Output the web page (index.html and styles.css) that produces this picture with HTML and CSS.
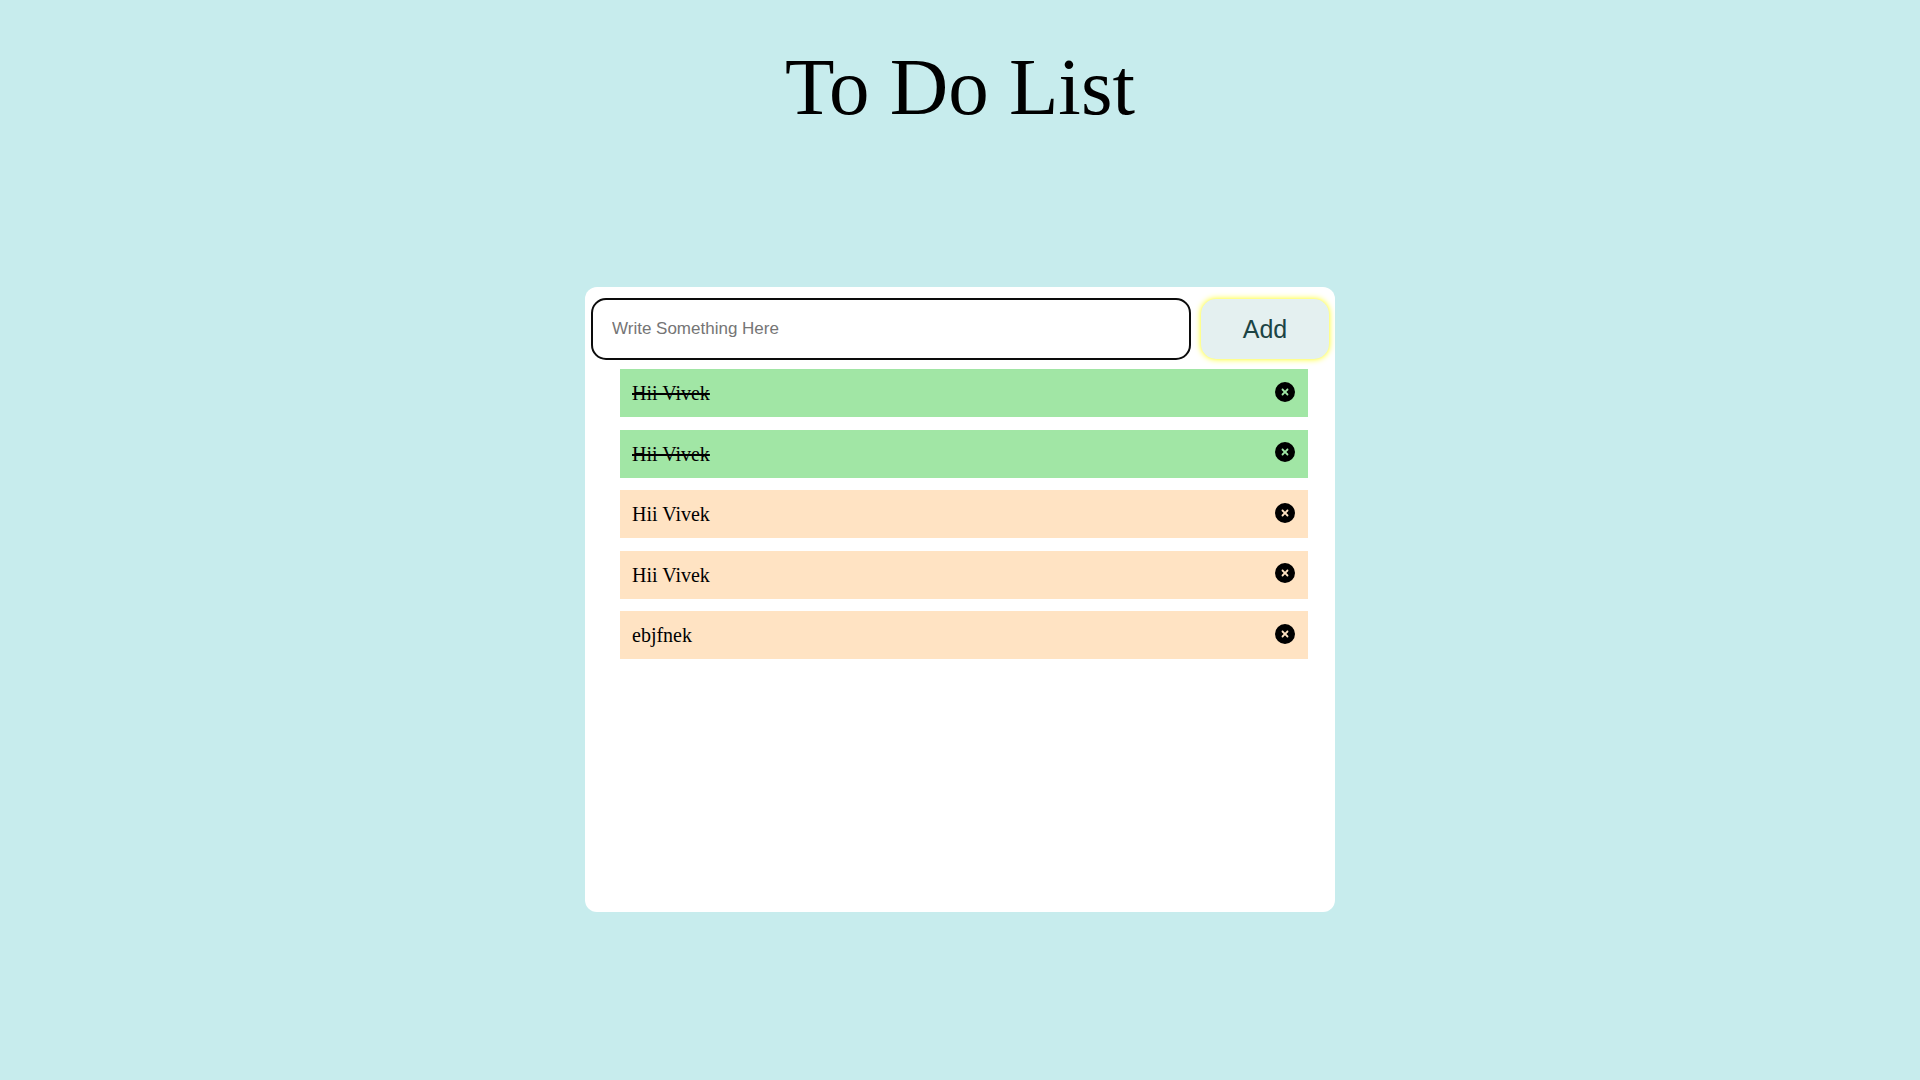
FILE: index.html
```html
<!DOCTYPE html>
<html lang="en">
<head>
<meta charset="utf-8">
<title>To Do List</title>
<link rel="stylesheet" href="styles.css">
</head>
<body>
<svg class="sprite" aria-hidden="true">
  <symbol id="remove" viewBox="0 0 512 512">
    <path fill-rule="evenodd" d="M256 0a256 256 0 1 0 0 512a256 256 0 1 0 0-512zM175 175c9.400-9.400 24.600-9.400 33.900 0l47 47 47-47c9.400-9.400 24.600-9.400 33.900 0s9.400 24.600 0 33.900l-47 47 47 47c9.400 9.400 9.400 24.600 0 33.900s-24.600 9.400-33.900 0l-47-47-47 47c-9.400 9.400-24.600 9.400-33.900 0s-9.400-24.600 0-33.900l47-47-47-47c-9.400-9.400-9.400-24.600 0-33.900z"/>
  </symbol>
</svg>
<h1 class="title">To Do List</h1>
<main class="card">
  <form class="entry">
    <input class="entry-text" type="text" placeholder="Write Something Here" aria-label="New task">
    <button class="entry-add" type="button">Add</button>
  </form>
  <ul class="tasks">
    <li class="task task-done"><span>Hii Vivek</span><button class="remove" type="button" aria-label="Remove"><svg class="icon"><use href="#remove"/></svg></button></li>
    <li class="task task-done"><span>Hii Vivek</span><button class="remove" type="button" aria-label="Remove"><svg class="icon"><use href="#remove"/></svg></button></li>
    <li class="task"><span>Hii Vivek</span><button class="remove" type="button" aria-label="Remove"><svg class="icon"><use href="#remove"/></svg></button></li>
    <li class="task"><span>Hii Vivek</span><button class="remove" type="button" aria-label="Remove"><svg class="icon"><use href="#remove"/></svg></button></li>
    <li class="task"><span>ebjfnek</span><button class="remove" type="button" aria-label="Remove"><svg class="icon"><use href="#remove"/></svg></button></li>
  </ul>
</main>
</body>
</html>
```
FILE: styles.css
```css
* {
  box-sizing: border-box;
}

body {
  margin: 0;
  min-height: 100vh;
  padding: 41px 16px;
  background: #c7eced;
  color: #000;
  font-family: "Liberation Serif", "Times New Roman", serif;
}

.sprite {
  display: none;
}

.title {
  margin: 0 0 154px;
  font-size: 81px;
  font-weight: 400;
  line-height: 92px;
  text-align: center;
}

.card {
  max-width: 750px;
  min-height: 625px;
  margin: 0 auto;
  padding: 11px 6px;
  border-radius: 12px;
  background: #fff;
}

.entry {
  display: flex;
  align-items: center;
  gap: 10px;
}

.entry-text {
  flex: 1;
  min-width: 0;
  height: 62px;
  padding: 0 19px;
  border: 2px solid #0c0c0c;
  border-radius: 15px;
  background: #fff;
  font-family: "Liberation Sans", Arial, sans-serif;
  font-size: 17px;
}

.entry-text::placeholder {
  color: #757575;
}

.entry-add {
  width: 128px;
  height: 60px;
  padding: 0;
  border: 0;
  border-radius: 15px;
  background: #e4f0f0;
  box-shadow: 0 0 6px #ff0;
  color: #1c4444;
  font-family: "Liberation Sans", Arial, sans-serif;
  font-size: 25px;
}

.tasks {
  display: flex;
  flex-direction: column;
  justify-content: space-between;
  min-height: 290px;
  margin: 9px 21px 0 29px;
  padding: 0;
  list-style: none;
}

.task {
  display: flex;
  align-items: center;
  justify-content: space-between;
  height: 48px;
  padding: 0 13px 0 12px;
  background: #ffe3c3;
  font-size: 20px;
  line-height: 24px;
}

.task-done {
  background: #a1e6a5;
  text-decoration: line-through 2px;
}

.remove {
  padding: 0 0 3px;
  border: 0;
  background: none;
  color: inherit;
}

.icon {
  display: block;
  width: 20px;
  height: 20px;
  fill: currentColor;
}
```
